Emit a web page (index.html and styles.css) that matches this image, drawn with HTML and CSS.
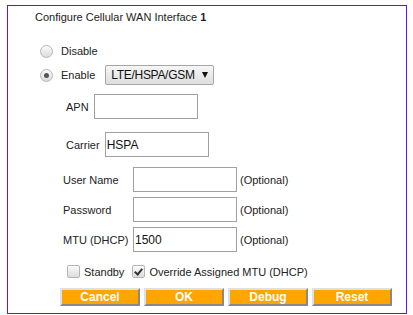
FILE: index.html
```html
<!DOCTYPE html>
<html lang="en">
<head>
    <meta charset="UTF-8">
    <title>Configure Cellular WAN Interface</title>
    <link rel="stylesheet" href="styles.css">
</head>
<body>
    <div class="panel">
        <div class="title">Configure Cellular WAN Interface <b>1</b></div>

        <div class="modes">
            <label class="mode"><input type="radio" name="mode"> Disable</label>
            <label class="mode"><input type="radio" name="mode" checked> Enable
                <span class="select">LTE/HSPA/GSM<span class="arrow"></span></span>
            </label>
        </div>

        <div class="field field-apn">
            <label>APN</label>
            <input type="text" class="text">
        </div>
        <div class="field field-carrier">
            <label>Carrier</label>
            <input type="text" class="text" value="HSPA">
        </div>

        <table class="auth">
            <tr>
                <td class="name">User Name</td>
                <td><input type="text" class="text"></td>
                <td>(Optional)</td>
            </tr>
            <tr>
                <td class="name">Password</td>
                <td><input type="password" class="text"></td>
                <td>(Optional)</td>
            </tr>
            <tr>
                <td class="name">MTU (DHCP)</td>
                <td><input type="text" class="text" value="1500"></td>
                <td>(Optional)</td>
            </tr>
        </table>

        <div class="options">
            <label><input type="checkbox"> Standby</label>
            <label><input type="checkbox" checked> Override Assigned MTU (DHCP)</label>
        </div>

        <div class="buttons">
            <button>Cancel</button>
            <button>OK</button>
            <button>Debug</button>
            <button>Reset</button>
        </div>
    </div>
</body>
</html>
```

FILE: styles.css
```css
/* General */
body {
    margin: 0;
    font-family: "Liberation Sans", Arial, sans-serif;
    font-size: 11px;
    color: #222;
    background: #fff;
}

.panel {
    box-sizing: border-box;
    width: 400px;
    height: 309px;
    margin: 5px 0 0 7px;
    border: 1px solid #6a0dff;
}

.title {
    padding: 4px 0 0 27px;
    line-height: 14px;
}

/* Disable / Enable */
.modes {
    margin-top: 15px;
    padding-left: 32px;
}
.mode {
    display: flex;
    align-items: center;
    height: 24px;
}
.mode input {
    margin: 0 8px 0 0;
}
.select {
    display: inline-flex;
    align-items: center;
    justify-content: space-between;
    box-sizing: border-box;
    width: 109px;
    height: 20px;
    margin-left: 10px;
    padding: 0 5px 0 5px;
    font-size: 12px;
    letter-spacing: -0.3px;
    color: #111;
    white-space: nowrap;
    border: 1px solid #a6a6a6;
    border-radius: 2px;
    background: linear-gradient(#f6f6f6, #dedede);
}
.arrow {
    width: 0;
    height: 0;
    border-left: 3px solid transparent;
    border-right: 3px solid transparent;
    border-top: 6px solid #111;
}

/* Radio and checkbox */
input[type="radio"],
input[type="checkbox"] {
    appearance: none;
    box-sizing: border-box;
    width: 13px;
    height: 13px;
    border: 1px solid #b5b5b5;
    background: linear-gradient(#fbfbfb, #dcdcdc);
    position: relative;
}
input[type="radio"] {
    border-radius: 50%;
}
input[type="radio"]:checked::after {
    content: "";
    position: absolute;
    left: 3px;
    top: 3px;
    width: 5px;
    height: 5px;
    border-radius: 50%;
    background: #555;
}
input[type="checkbox"] {
    border-radius: 2px;
    margin: 0 4px 0 0;
}
input[type="checkbox"]:checked::after {
    content: "";
    position: absolute;
    left: 3px;
    top: 1px;
    width: 3px;
    height: 6px;
    border: solid #333;
    border-width: 0 2px 2px 0;
    transform: rotate(40deg);
}

/* Text inputs */
.text {
    box-sizing: border-box;
    width: 104px;
    height: 25px;
    margin: 0;
    padding: 0 1px;
    font-family: "Liberation Sans", Arial, sans-serif;
    font-size: 12px;
    color: #111;
    border: 1px solid #a0a0a0;
    border-radius: 0;
    outline: none;
}

.field {
    display: flex;
    align-items: center;
    gap: 5px;
    padding-left: 58px;
}
.field-apn {
    margin-top: 7px;
}
.field-carrier {
    margin-top: 13px;
}

/* User name / password table */
.auth {
    margin: 10px 0 0 55px;
    border-collapse: collapse;
}
.auth td {
    padding: 0 0 5px;
    white-space: nowrap;
}
.auth .name {
    width: 70px;
}
.auth td:last-child {
    padding-left: 3px;
}

/* Checkboxes */
.options {
    display: flex;
    gap: 8px;
    margin-top: 8px;
    padding-left: 59px;
}
.options label {
    display: flex;
    align-items: center;
}

/* Buttons */
.buttons {
    display: flex;
    gap: 4px;
    margin-top: 10px;
    padding-left: 52px;
}
.buttons button {
    width: 80px;
    height: 18px;
    padding: 0;
    font-family: "Liberation Sans", Arial, sans-serif;
    font-size: 12px;
    font-weight: bold;
    color: #fff;
    background: #ffa500;
    border: 2px solid;
    border-color: #e0e0e0 #888 #888 #e0e0e0;
}
```
